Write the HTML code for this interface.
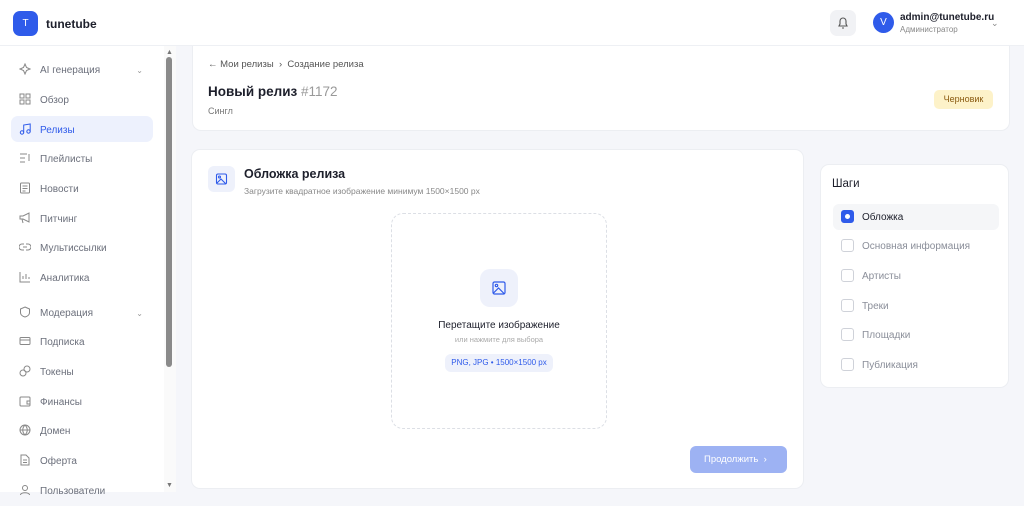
<!DOCTYPE html>
<html><head><meta charset="utf-8"><style>
*{box-sizing:border-box;margin:0;padding:0}
body{width:1024px;height:492px;overflow:hidden;background:#f5f6fa;font-family:"Liberation Sans",sans-serif;position:relative;color:#1d1f2b}
.hdr{position:absolute;left:0;top:0;width:1024px;height:46px;background:#fff;border-bottom:1px solid #eef0f4}
.logo{position:absolute;left:13px;top:11px;width:25px;height:25px;border-radius:7px;background:#2f5bea;color:#fff;font-size:10px;text-align:center;line-height:25px}
.brand{position:absolute;left:46px;top:17px;font-size:12px;font-weight:bold}
.bell{position:absolute;left:830px;top:10px;width:26px;height:26px;border-radius:7px;background:#f1f2f5}
.av{position:absolute;left:873px;top:12px;width:21px;height:21px;border-radius:50%;background:#2f5bea;color:#fff;font-size:10px;text-align:center;line-height:21px}
.side{position:absolute;left:0;top:46px;width:176px;height:446px;background:#fff}
.item{position:absolute;left:11px;width:142px;height:26px;border-radius:7px;font-size:10px;color:#6b6f7b;line-height:29px;padding-left:29px}
.item svg{position:absolute;left:8px;top:7px}
.item.act{background:#edf1fd;color:#2f5bea}
.chev{position:absolute;right:10px;top:0;font-size:8px;color:#999}
.sb{position:absolute;left:166px;top:57px;width:6px;height:310px;border-radius:3px;background:#8a8a8a}
.card{position:absolute;background:#fff;border:1px solid #eceef2;border-radius:9px}
.chk{position:absolute;left:20px;width:13px;height:13px;border:1px solid #cfd2d9;border-radius:3px}
.st{position:absolute;left:12px;width:166px;height:26px;font-size:10px;color:#8a8e99;line-height:28px;padding-left:29px;border-radius:6px}
.st .chk{left:8px;top:6px}
</style></head><body>
<div class="hdr">
<div class="logo">T</div><div class="brand">tunetube</div>
<div class="bell"><svg width="26" height="26" viewBox="0 0 26 26" fill="none" stroke="#555" stroke-width="1.1"><path d="M9 16h8l-1-2v-3a3 3 0 0 0-6 0v3z M12 18h2"/></svg></div>
<div class="av">V</div>
<div style="position:absolute;left:900px;top:12px;font-size:10px;font-weight:bold">admin@tunetube.ru</div>
<div style="position:absolute;left:900px;top:25px;font-size:8px;color:#888">Администратор</div>
<div style="position:absolute;left:991px;top:18px;font-size:9px;color:#888">⌄</div>
</div>
<div class="side">
<div class="item" style="top:10px">AI генерация<span class="chev">⌄</span><svg width="12" height="12" fill="none" stroke="#888"><path d="M6 1l1.5 3.5L11 6 7.5 7.5 6 11 4.5 7.5 1 6l3.5-1.5z"/></svg></div>
<div class="item" style="top:40px">Обзор<svg width="12" height="12" fill="none" stroke="#888"><rect x="1" y="1" width="4" height="4"/><rect x="7" y="1" width="4" height="4"/><rect x="1" y="7" width="4" height="4"/><rect x="7" y="7" width="4" height="4"/></svg></div>
<div class="item act" style="top:70px">Релизы<svg width="12" height="12" fill="none" stroke="#2f5bea"><circle cx="3" cy="9.5" r="1.7"/><circle cx="9.5" cy="8.5" r="1.7"/><path d="M4.7 9.5V2l6.5-1v7.5"/></svg></div>
<div class="item" style="top:99px">Плейлисты<svg width="12" height="12" fill="none" stroke="#888"><path d="M1 2h7M1 6h5M1 10h5M10 2v7"/></svg></div>
<div class="item" style="top:129px">Новости<svg width="12" height="12" fill="none" stroke="#888"><rect x="1.5" y="1" width="9" height="10" rx="1"/><path d="M3.5 4h5M3.5 6.5h5M3.5 9h3"/></svg></div>
<div class="item" style="top:159px">Питчинг<svg width="12" height="12" fill="none" stroke="#888"><path d="M1 4h3l6-3v9L4 7H1zM3 7l1 4"/></svg></div>
<div class="item" style="top:188px">Мультиссылки<svg width="12" height="12" fill="none" stroke="#888"><path d="M5 3H3a3 3 0 0 0 0 6h2M7 3h2a3 3 0 0 1 0 6H7M4 6h4"/></svg></div>
<div class="item" style="top:218px">Аналитика<svg width="12" height="12" fill="none" stroke="#888"><path d="M1 1v10h10M4 8V5M7 8V3M10 8V6"/></svg></div>
<div class="item" style="top:253px">Модерация<span class="chev">⌄</span><svg width="12" height="12" fill="none" stroke="#888"><path d="M6 1l4.5 2v3.5C10.5 9 8 10.5 6 11 4 10.5 1.5 9 1.5 6.5V3z"/></svg></div>
<div class="item" style="top:282px">Подписка<svg width="12" height="12" fill="none" stroke="#888"><rect x="1" y="2.5" width="10" height="7" rx="1"/><path d="M1 5h10"/></svg></div>
<div class="item" style="top:312px">Токены<svg width="12" height="12" fill="none" stroke="#888"><circle cx="4" cy="8" r="3"/><circle cx="8" cy="4" r="3"/></svg></div>
<div class="item" style="top:342px">Финансы<svg width="12" height="12" fill="none" stroke="#888"><rect x="1" y="2" width="10" height="9" rx="1"/><path d="M8 6h3v3H8z"/></svg></div>
<div class="item" style="top:371px">Домен<svg width="12" height="12" fill="none" stroke="#888"><circle cx="6" cy="6" r="5"/><path d="M1 6h10M6 1c-3 3-3 7 0 10M6 1c3 3 3 7 0 10"/></svg></div>
<div class="item" style="top:401px">Оферта<svg width="12" height="12" fill="none" stroke="#888"><path d="M2 1h5l3 3v7H2zM4 6h4M4 8.5h4"/></svg></div>
<div class="item" style="top:431px">Пользователи<svg width="12" height="12" fill="none" stroke="#888"><circle cx="6" cy="4" r="2.5"/><path d="M1.5 11c0-3 9-3 9 0"/></svg></div>
<div style="position:absolute;left:164px;top:0;width:12px;height:446px;background:#fafafa"></div>
<div style="position:absolute;left:166px;top:3px;font-size:7px;color:#777">▲</div>
<div style="position:absolute;left:166px;top:436px;font-size:7px;color:#777">▼</div>
</div>
<div class="sb"></div>
<div class="card" style="left:192px;top:46px;width:818px;height:85px;border-radius:0 0 9px 9px;border-top:none">
<div style="position:absolute;left:15px;top:13px;font-size:9.5px;color:#555">← Мои релизы &nbsp;›&nbsp; Создание релиза</div>
<div style="position:absolute;left:15px;top:38px;font-size:13.5px;font-weight:bold">Новый релиз <span style="font-weight:normal;color:#999">#1172</span></div>
<div style="position:absolute;left:15px;top:60px;font-size:9px;color:#777">Сингл</div>
<div style="position:absolute;left:741px;top:44px;width:59px;height:19px;border-radius:5px;background:#fdf2c9;color:#8a5a10;font-size:9px;text-align:center;line-height:19px">Черновик</div>
</div>
<div class="card" style="left:191px;top:149px;width:613px;height:340px">
<div style="position:absolute;left:16px;top:16px;width:27px;height:26px;border-radius:6px;background:#eef1fb"><svg width="27" height="26" fill="none" stroke="#2f5bea" stroke-width="1.1"><rect x="8.5" y="8" width="10" height="10" rx="1.5"/><circle cx="11.5" cy="11" r="1"/><path d="M9 17l4-4 5 5"/></svg></div>
<div style="position:absolute;left:52px;top:17px;font-size:12.5px;font-weight:bold">Обложка релиза</div>
<div style="position:absolute;left:52px;top:36px;font-size:8.5px;color:#888">Загрузите квадратное изображение минимум 1500×1500 px</div>
<div style="position:absolute;left:199px;top:63px;width:216px;height:216px;border:1px dashed #dcdfe5;border-radius:12px">
<div style="position:absolute;left:88px;top:55px;width:38px;height:38px;border-radius:10px;background:#eef1fb"><svg width="38" height="38" fill="none" stroke="#2f5bea" stroke-width="1.2"><rect x="13" y="13" width="12" height="12" rx="1.5"/><circle cx="16.5" cy="16.5" r="1.2"/><path d="M13.5 24l5-5 6 6"/></svg></div>
<div style="position:absolute;left:0;width:100%;top:106px;text-align:center;font-size:10px">Перетащите изображение</div>
<div style="position:absolute;left:0;width:100%;top:121px;text-align:center;font-size:7.5px;color:#aaa">или нажмите для выбора</div>
<div style="position:absolute;left:53px;top:140px;width:108px;height:18px;border-radius:6px;background:#eef1fb;color:#2f5bea;font-size:8px;text-align:center;line-height:18px">PNG, JPG • 1500×1500 px</div>
</div>
<div style="position:absolute;left:498px;top:296px;width:97px;height:27px;border-radius:6px;background:#9db2f3;color:#fff;font-size:9.5px;line-height:27px;padding-left:14px">Продолжить &nbsp;›</div>
</div>
<div class="card" style="left:820px;top:164px;width:189px;height:224px">
<div style="position:absolute;left:11px;top:13px;font-size:11.5px">Шаги</div>
<div class="st" style="top:39px;background:#f5f6f8;color:#1d1f2b"><div class="chk" style="background:#2f5bea;border-color:#2f5bea"><div style="width:5px;height:5px;background:#fff;border-radius:50%;margin:3px"></div></div>Обложка</div>
<div class="st" style="top:68px">Основная информация<div class="chk"></div></div>
<div class="st" style="top:98px">Артисты<div class="chk"></div></div>
<div class="st" style="top:128px">Треки<div class="chk"></div></div>
<div class="st" style="top:157px">Площадки<div class="chk"></div></div>
<div class="st" style="top:187px">Публикация<div class="chk"></div></div>
</div>
</body></html>
